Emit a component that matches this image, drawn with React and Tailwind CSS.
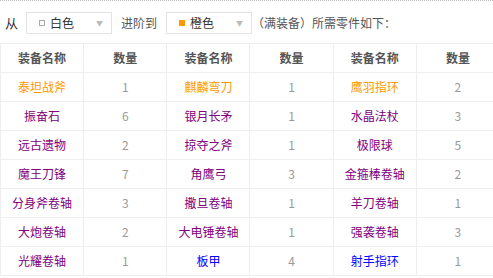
const rows = [
  [["泰坦战斧", "o"], 1, ["麒麟弯刀", "o"], 1, ["鹰羽指环", "o"], 2],
  [["振奋石", "p"], 6, ["银月长矛", "p"], 1, ["水晶法杖", "p"], 3],
  [["远古遗物", "p"], 2, ["掠夺之斧", "p"], 1, ["极限球", "p"], 5],
  [["魔王刀锋", "p"], 7, ["角鹰弓", "p"], 3, ["金箍棒卷轴", "p"], 2],
  [["分身斧卷轴", "p"], 3, ["撒旦卷轴", "p"], 1, ["羊刀卷轴", "p"], 1],
  [["大炮卷轴", "p"], 2, ["大电锤卷轴", "p"], 1, ["强袭卷轴", "p"], 3],
  [["光耀卷轴", "p"], 1, ["板甲", "b"], 4, ["射手指环", "b"], 1],
];

const colors = {
  o: "text-[#ff9900]",
  p: "text-[#800080]",
  b: "text-[#0000ff]",
};

function Select({ label, swatch }) {
  return (
    <div className="flex h-[22px] w-[86px] items-center border border-[#e3e3e3] bg-white pl-[12px] pr-[8px]">
      {swatch}
      <span className="ml-[5px] text-[#333]">{label}</span>
      <span className="ml-auto text-[7px] text-[#bbb]">▼</span>
    </div>
  );
}

export default function App() {
  return (
    <div className="h-[278px] w-[493px] overflow-hidden border-t border-dotted border-[#bbb] bg-white font-['Noto_Sans_CJK_SC',sans-serif] text-[12px]">
      <div className="mt-[11px] flex items-center">
        <span className="ml-[5px] mr-[8px] text-[13px] text-[#333]">从</span>
        <Select label="白色" swatch={<span className="h-[6px] w-[6px] border border-[#aaa] bg-white" />} />
        <span className="ml-[9px] mr-[9px] text-[#555]">进阶到</span>
        <Select label="橙色" swatch={<span className="h-[6px] w-[6px] bg-[#ff9900]" />} />
        <span className="text-[#555]">（满装备）所需零件如下：</span>
      </div>
      <table className="mt-[9px] w-[500px] table-fixed border-collapse text-center">
        <thead>
          <tr className="h-[29px]">
            {["装备名称", "数量", "装备名称", "数量", "装备名称", "数量"].map((h, i) => (
              <th key={i} className="border border-[#eee] font-bold text-[#555]">
                {h}
              </th>
            ))}
          </tr>
        </thead>
        <tbody>
          {rows.map((r, i) => (
            <tr key={i} className="h-[29px]">
              {r.map((c, j) =>
                Array.isArray(c) ? (
                  <td key={j} className={`border border-[#eee] ${colors[c[1]]}`}>
                    {c[0]}
                  </td>
                ) : (
                  <td key={j} className="border border-[#eee] text-[#999]">
                    {c}
                  </td>
                )
              )}
            </tr>
          ))}
        </tbody>
      </table>
    </div>
  );
}
